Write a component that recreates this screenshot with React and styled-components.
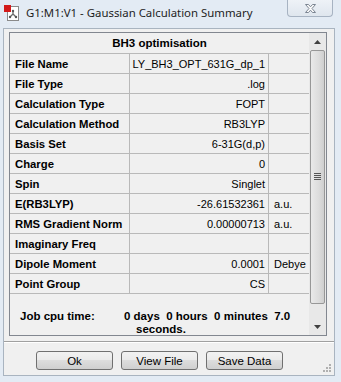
import React from "react";
import styled, { createGlobalStyle } from "styled-components";

const GlobalStyle = createGlobalStyle`
  html, body {
    margin: 0;
    padding: 0;
    background: #e3ebf4;
  }
`;

const rows = [
  { label: "File Name", value: "LY_BH3_OPT_631G_dp_1", unit: "" },
  { label: "File Type", value: ".log", unit: "" },
  { label: "Calculation Type", value: "FOPT", unit: "" },
  { label: "Calculation Method", value: "RB3LYP", unit: "" },
  { label: "Basis Set", value: "6-31G(d,p)", unit: "" },
  { label: "Charge", value: "0", unit: "" },
  { label: "Spin", value: "Singlet", unit: "" },
  { label: "E(RB3LYP)", value: "-26.61532361", unit: "a.u." },
  { label: "RMS Gradient Norm", value: "0.00000713", unit: "a.u." },
  { label: "Imaginary Freq", value: "", unit: "" },
  { label: "Dipole Moment", value: "0.0001", unit: "Debye" },
  { label: "Point Group", value: "CS", unit: "" },
];

const Window = styled.div`
  width: 341px;
  height: 382px;
  display: flex;
  flex-direction: column;
  background: #e3ebf4;
  font-family: "Liberation Sans", Arial, sans-serif;
  overflow: hidden;
`;

const TitleBar = styled.div`
  height: 28px;
  display: flex;
  align-items: flex-start;
  flex-shrink: 0;
`;

const AppIcon = styled.svg`
  width: 17px;
  height: 17px;
  margin: 4px 0 0 3px;
`;

const Title = styled.span`
  font-family: "Noto Sans", "Open Sans", sans-serif;
  font-size: 11.4px;
  color: #1e1e1e;
  margin: 5px 0 0 6px;
  white-space: nowrap;
`;

const CloseButton = styled.div`
  margin-left: auto;
  margin-right: 8px;
  width: 46px;
  height: 17px;
  border: 1px solid #a7b3c2;
  border-top: none;
  border-radius: 0 0 4px 4px;
  background: linear-gradient(#eef2f7, #dfe6ee);
  display: flex;
  align-items: center;
  justify-content: center;
  box-sizing: border-box;
`;

const Client = styled.div`
  flex: 1;
  margin: 0 6px 6px 3px;
  border: 1px solid #a9b4c0;
  background: #f0f0f0;
  display: flex;
  flex-direction: column;
  padding: 3px 7px 0 5px;
  position: relative;
`;

const Panel = styled.div`
  height: 304px;
  box-sizing: border-box;
  border: 1px solid #828790;
  display: flex;
  background: #f0f0f0;
`;

const Table = styled.div`
  flex: 1;
  display: grid;
  grid-template-columns: 120px 139px 1fr;
  grid-template-rows: 21px repeat(12, 20px) 1fr;
`;

const HeaderCell = styled.div`
  grid-column: 1 / -1;
  display: flex;
  align-items: center;
  justify-content: center;
  font-weight: bold;
  font-size: 11.5px;
  color: #000;
  border-bottom: 1px solid #b9b9b9;
`;

const Cell = styled.div`
  display: flex;
  align-items: center;
  box-sizing: border-box;
  font-size: ${(p) => (p.$bold ? "11.3px" : "11px")};
  color: #000;
  white-space: nowrap;
  overflow: hidden;
  border-bottom: 1px solid #b9b9b9;
  border-right: ${(p) => (p.$last ? "none" : "1px solid #b9b9b9")};
  justify-content: ${(p) => (p.$align === "right" ? "flex-end" : "flex-start")};
  padding: ${(p) => (p.$align === "right" ? "0 3px 0 0" : "0 0 0 5px")};
  font-weight: ${(p) => (p.$bold ? "bold" : "normal")};
`;

const JobRow = styled.div`
  grid-column: 1 / -1;
  display: flex;
  font-weight: bold;
  font-size: 11.5px;
  color: #000;
  padding: 16px 0 0 10px;
  line-height: 13px;
  white-space: nowrap;
`;

const JobLabel = styled.span`
  width: 104px;
`;

const JobValue = styled.div`
  display: flex;
  flex-direction: column;
`;

const Seconds = styled.span`
  padding-left: 12px;
`;

const ScrollBar = styled.div`
  width: 17px;
  display: flex;
  flex-direction: column;
  background: #e8e8e8;
`;

const ScrollArrow = styled.div`
  height: 17px;
  display: flex;
  align-items: center;
  justify-content: center;
  flex-shrink: 0;
`;

const Thumb = styled.div`
  height: 254px;
  margin: 0 1px;
  border: 1px solid #979797;
  border-radius: 2px;
  background: linear-gradient(90deg, #e9e9e9, #dcdcdc 60%, #cfcfcf);
  display: flex;
  align-items: center;
  justify-content: center;
  box-sizing: border-box;
`;

const Track = styled.div`
  flex: 1;
`;

const Separator = styled.div`
  height: 0;
  border-top: 1px solid #a0a0a0;
  border-bottom: 1px solid #ffffff;
  margin: 5px -7px 0 -5px;
`;

const ButtonRow = styled.div`
  display: flex;
  gap: 8px;
  padding: 8px 0 0 27px;
`;

const Button = styled.button`
  width: 77px;
  height: 19px;
  padding: 0;
  border: 1px solid #707070;
  border-radius: 3px;
  background: linear-gradient(#f2f2f2 0%, #ebebeb 45%, #dddddd 50%, #cfcfcf 100%);
  font-family: "Liberation Sans", Arial, sans-serif;
  font-size: 11.5px;
  color: #000;
`;

const Grip = styled.svg`
  position: absolute;
  right: 2px;
  bottom: 2px;
  width: 10px;
  height: 10px;
`;

export default function App() {
  return (
    <>
      <GlobalStyle />
      <Window>
        <TitleBar>
          <AppIcon viewBox="0 0 17 17">
            <rect x="4.5" y="2.5" width="11" height="14" fill="#fff" stroke="#8a8a8a" />
            <rect x="1" y="1" width="7" height="7" fill="#d21a1a" />
            <path d="M10 7 L10 10 L7 13 M10 10 L13 13" stroke="#6a6a6a" strokeWidth="1.3" fill="none" />
            <circle cx="10" cy="7" r="1.2" fill="#555" />
            <circle cx="7" cy="13" r="1.2" fill="#555" />
            <circle cx="13" cy="13" r="1.2" fill="#555" />
          </AppIcon>
          <Title>G1:M1:V1 - Gaussian Calculation Summary</Title>
          <CloseButton>
            <svg width="13" height="11" viewBox="0 0 13 11">
              <path
                d="M1.5 1.5 H4.5 L6.5 3.8 L8.5 1.5 H11.5 L8 5.5 L11.5 9.5 H8.5 L6.5 7.2 L4.5 9.5 H1.5 L5 5.5 Z"
                fill="#fbfbfb"
                stroke="#7b8592"
                strokeWidth="1"
                strokeLinejoin="round"
              />
            </svg>
          </CloseButton>
        </TitleBar>
        <Client>
          <Panel>
            <Table>
              <HeaderCell>BH3 optimisation</HeaderCell>
              {rows.map((r) => (
                <React.Fragment key={r.label}>
                  <Cell $bold>{r.label}</Cell>
                  <Cell $align="right">{r.value}</Cell>
                  <Cell $last>{r.unit}</Cell>
                </React.Fragment>
              ))}
              <JobRow>
                <JobLabel>Job cpu time:</JobLabel>
                <JobValue>
                  <span>0 days&nbsp; 0 hours&nbsp; 0 minutes&nbsp; 7.0</span>
                  <Seconds>seconds.</Seconds>
                </JobValue>
              </JobRow>
            </Table>
            <ScrollBar>
              <ScrollArrow>
                <svg width="7" height="4" viewBox="0 0 7 4">
                  <path d="M0 4 L3.5 0 L7 4 Z" fill="#404040" />
                </svg>
              </ScrollArrow>
              <Thumb>
                <svg width="7" height="8" viewBox="0 0 7 8">
                  <path d="M0 0.5 H7 M0 2.5 H7 M0 4.5 H7 M0 6.5 H7" stroke="#555" strokeWidth="1" />
                </svg>
              </Thumb>
              <Track />
              <ScrollArrow>
                <svg width="7" height="4" viewBox="0 0 7 4">
                  <path d="M0 0 L7 0 L3.5 4 Z" fill="#404040" />
                </svg>
              </ScrollArrow>
            </ScrollBar>
          </Panel>
          <Separator />
          <ButtonRow>
            <Button>Ok</Button>
            <Button>View File</Button>
            <Button>Save Data</Button>
          </ButtonRow>
          <Grip viewBox="0 0 10 10">
            <g fill="#b0b0b0">
              <rect x="7" y="1" width="2" height="2" />
              <rect x="4" y="4" width="2" height="2" />
              <rect x="7" y="4" width="2" height="2" />
              <rect x="1" y="7" width="2" height="2" />
              <rect x="4" y="7" width="2" height="2" />
              <rect x="7" y="7" width="2" height="2" />
            </g>
          </Grip>
        </Client>
      </Window>
    </>
  );
}
